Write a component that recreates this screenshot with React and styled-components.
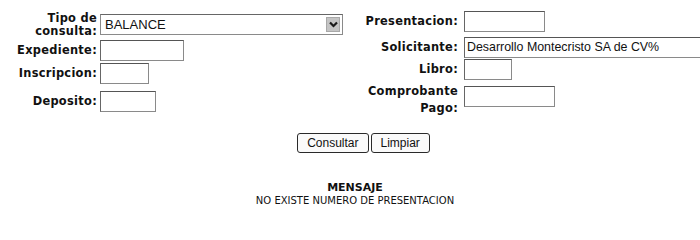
import React from 'react';
import styled, { createGlobalStyle } from 'styled-components';

const GlobalStyle = createGlobalStyle`
  html, body {
    margin: 0;
    padding: 0;
    background: #ffffff;
    overflow: hidden;
  }
  body {
    width: 700px;
    height: 224px;
    color: #111111;
  }
`;

const Page = styled.div`
  width: 700px;
  height: 224px;
  display: flex;
  flex-direction: column;
`;

const FormArea = styled.div`
  display: flex;
  align-items: flex-start;
`;

const Column = styled.div`
  display: flex;
  flex-direction: column;
  width: ${(p) => p.$width}px;
  padding-top: ${(p) => p.$top}px;
  flex-shrink: 0;
`;

const Row = styled.div`
  display: flex;
  align-items: center;
  height: ${(p) => p.$height}px;
`;

const Label = styled.div`
  width: ${(p) => p.$width}px;
  padding-right: ${(p) => p.$gap}px;
  flex-shrink: 0;
  text-align: right;
  font-family: "DejaVu Sans", Verdana, sans-serif;
  font-weight: bold;
  font-size: 11.4px;
  line-height: ${(p) => p.$lh || 13}px;
  letter-spacing: 0.3px;
  white-space: nowrap;
  align-self: ${(p) => p.$align || 'center'};
  margin-top: ${(p) => p.$mt || 0}px;
`;

const TextBox = styled.div`
  box-sizing: border-box;
  width: ${(p) => p.$width}px;
  height: 21px;
  flex-shrink: 0;
  border: 1px solid #8a8a8a;
  border-top-color: #555;
  border-left-color: #666;
  background: #ffffff;
  font-family: "Liberation Sans", Arial, sans-serif;
  font-size: 12.4px;
  line-height: 19px;
  padding-left: 2px;
  white-space: nowrap;
  overflow: hidden;
  align-self: ${(p) => p.$align || 'center'};
  margin-top: ${(p) => p.$mt || 0}px;
`;

const SelectBox = styled.div`
  box-sizing: border-box;
  width: 243px;
  height: 21px;
  display: flex;
  align-items: center;
  justify-content: space-between;
  border: 1px solid #8a8a8a;
  border-top-color: #666;
  background: #ffffff;
  padding: 0 2px 0 4px;
  font-family: "Liberation Sans", Arial, sans-serif;
  font-size: 13px;
`;

const ArrowBox = styled.span`
  width: 14px;
  height: 15px;
  display: flex;
  align-items: center;
  justify-content: center;
  background: #c4c4c4;
  border: 1px solid #a8a8a8;
  box-sizing: border-box;
`;

const Buttons = styled.div`
  display: flex;
  justify-content: center;
  gap: 2px;
  padding-left: 27px;
  margin-top: 14px;
`;

const Button = styled.button`
  height: 20px;
  padding: 0 9px;
  border: 1px solid #2a2a2a;
  border-radius: 3px;
  background: #fafafa;
  color: #111;
  font-family: "Liberation Sans", Arial, sans-serif;
  font-size: 12px;
  line-height: 18px;
`;

const Message = styled.div`
  padding-left: 10px;
  margin-top: 28px;
  text-align: center;
  font-family: "DejaVu Sans", Verdana, sans-serif;
`;

const MessageTitle = styled.div`
  font-size: 11px;
  font-weight: bold;
  line-height: 13px;
`;

const MessageText = styled.div`
  font-size: 10px;
  line-height: 13px;
`;

const Chevron = () => (
  <svg width="9" height="7" viewBox="0 0 9 7">
    <path d="M1 1.5 L4.5 5 L8 1.5" fill="none" stroke="#1a1a1a" strokeWidth="2.2" />
  </svg>
);

export default function App() {
  return (
    <Page>
      <GlobalStyle />
      <FormArea>
        <Column $width={362} $top={11}>
          <Row $height={27}>
            <Label $width={97} $gap={3}>Tipo de<br />consulta:</Label>
            <SelectBox>
              <span>BALANCE</span>
              <ArrowBox><Chevron /></ArrowBox>
            </SelectBox>
          </Row>
          <Row $height={24}>
            <Label $width={97} $gap={3}>Expediente:</Label>
            <TextBox $width={84} />
          </Row>
          <Row $height={22}>
            <Label $width={97} $gap={3}>Inscripcion:</Label>
            <TextBox $width={49} />
          </Row>
          <Row $height={35}>
            <Label $width={97} $gap={3}>Deposito:</Label>
            <TextBox $width={56} />
          </Row>
        </Column>
        <Column $width={338} $top={11}>
          <Row $height={25}>
            <Label $width={96} $gap={6} $align="flex-start" $mt={4}>Presentacion:</Label>
            <TextBox $width={81} $align="flex-start" />
          </Row>
          <Row $height={22}>
            <Label $width={96} $gap={6}>Solicitante:</Label>
            <TextBox $width={260}>Desarrollo Montecristo SA de CV%</TextBox>
          </Row>
          <Row $height={22}>
            <Label $width={96} $gap={6}>Libro:</Label>
            <TextBox $width={48} />
          </Row>
          <Row $height={34}>
            <Label $width={96} $gap={6} $lh={17} $align="flex-start" $mt={3}>Comprobante<br />Pago:</Label>
            <TextBox $width={91} $align="flex-start" $mt={6} />
          </Row>
        </Column>
      </FormArea>
      <Buttons>
        <Button>Consultar</Button>
        <Button>Limpiar</Button>
      </Buttons>
      <Message>
        <MessageTitle>MENSAJE</MessageTitle>
        <MessageText>NO EXISTE NUMERO DE PRESENTACION</MessageText>
      </Message>
    </Page>
  );
}
